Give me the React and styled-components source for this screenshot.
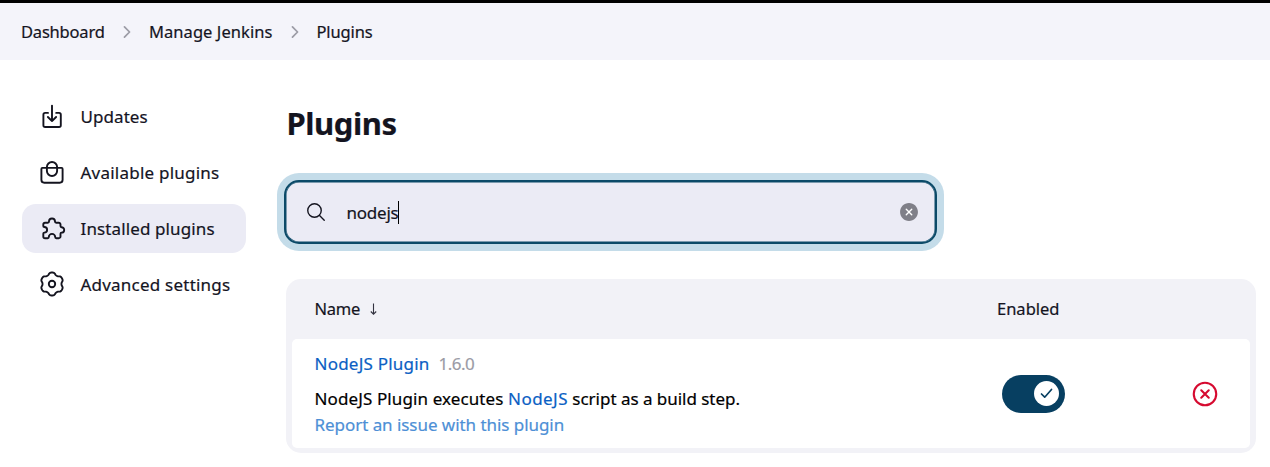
import React from "react";
import styled, { createGlobalStyle } from "styled-components";
import {
  IoSearchOutline,
  IoChevronForwardOutline,
  IoCloseCircle,
  IoCloseCircleOutline,
} from "react-icons/io5";

const GlobalStyle = createGlobalStyle`
  * { box-sizing: border-box; }
  body {
    margin: 0;
    background: #fff;
    color: #14141f;
    font-family: "Noto Sans", "Open Sans", sans-serif;
    font-size: 17px;
    line-height: 26px;
    overflow: hidden;
  }
`;

const Label = styled.span`
  white-space: nowrap;
  letter-spacing: ${(p) => p.$track || 0}px;
  -webkit-text-stroke: 0.2px currentColor;
`;

const Page = styled.div`
  height: 467px;
  border-top: 3px solid #000;
`;

const Breadcrumbs = styled.nav`
  height: 57px;
  padding-left: 21px;
  display: flex;
  align-items: center;
  background: #f4f4fa;
  font-size: 16.5px;
`;

const Crumb = styled.span`
  width: ${(p) => p.$width}px;
  flex: none;
`;

const Separator = styled(IoChevronForwardOutline)`
  width: 18px;
  height: 18px;
  margin: 0 13px 0 14px;
  color: #9c9ca6;
  flex: none;

  path {
    stroke-width: 50;
  }
`;

const Body = styled.div`
  display: flex;
  padding-left: 22px;
`;

const Sidebar = styled.aside`
  width: 224px;
  padding-top: 32px;
  display: flex;
  flex-direction: column;
  gap: 7px;
`;

const Task = styled.a`
  height: 49px;
  padding-left: 16px;
  display: flex;
  align-items: center;
  gap: 14.5px;
  border-radius: 14px;
  background: ${(p) => (p.$active ? "#ebebf5" : "transparent")};
`;

const TaskIcon = styled.svg`
  width: 28px;
  height: 28px;
  margin-bottom: 1px;
  flex: none;
  fill: none;
  stroke: #14141f;
  stroke-width: 1.9;
  stroke-linecap: round;
  stroke-linejoin: round;
`;

const Main = styled.main`
  width: 972px;
  margin-left: 38px;
  padding-top: 42px;
`;

const Title = styled.h1`
  margin: 0 0 0 2.5px;
  height: 44px;
  font-size: 31px;
  line-height: 43px;
  font-weight: 700;
`;

const SearchBox = styled.div`
  width: 653px;
  height: 64px;
  margin-top: 34px;
  padding: 0 15px 0 19px;
  display: flex;
  align-items: center;
  border: 2px solid #0b4a68;
  border-radius: 15px;
  background: #ebebf5;
  box-shadow: inset 0 0 0 0.5px #0b4a68, 0 0 0 7px #c4dce9;
`;

const SearchIcon = styled(IoSearchOutline)`
  width: 22px;
  height: 22px;
`;

const Query = styled.div`
  flex: 1;
  margin-left: 19.5px;
  padding-top: 1px;
  display: flex;
  align-items: center;
`;

const Caret = styled.span`
  width: 1px;
  height: 23px;
  margin-left: -0.5px;
  background: #000;
`;

const ClearIcon = styled(IoCloseCircle)`
  width: 22px;
  height: 22px;
  color: #7f7f88;
`;

const ClearButton = styled.span`
  display: flex;
  border-radius: 50%;
  background: radial-gradient(circle, #fff 6px, transparent 6.5px);
`;

const Table = styled.section`
  width: 970px;
  height: 174px;
  margin: 35px 0 0 2px;
  padding: 0 6px 5px;
  border-radius: 15px;
  background: #f2f2f7;
`;

const Columns = styled.div`
  display: grid;
  grid-template-columns: 682.5px 196px 1fr;
  align-items: center;
  padding-left: 22.5px;
`;

const TableHead = styled(Columns)`
  height: 60px;
  font-size: 16.5px;
`;

const TableRow = styled(Columns)`
  height: 109px;
  background: #fff;
  border-radius: 5px;
`;

const SortArrow = styled.svg`
  width: 9px;
  height: 12px;
  margin-left: 9px;
`;

const Details = styled.div`
  display: flex;
  flex-direction: column;
  padding-top: 1px;
`;

const NameLine = styled.div`
  display: flex;
  gap: 9px;
  margin-bottom: 9px;
`;

const Link = styled.a`
  color: ${(p) => (p.$soft ? "#4d8fd6" : "#0b5fc4")};
`;

const Version = styled.span`
  color: #9b9ba6;
`;

const Description = styled.div`
  color: #000;
  white-space: nowrap;
`;

const Toggle = styled.div`
  width: 63px;
  height: 38px;
  margin-left: 5px;
  padding-right: 6px;
  display: flex;
  align-items: center;
  justify-content: flex-end;
  border-radius: 19px;
  background: #073f61;
`;

const Knob = styled.div`
  width: 25px;
  height: 25px;
  display: flex;
  align-items: center;
  justify-content: center;
  border-radius: 50%;
  background: #fff;
`;

const RemoveIcon = styled(IoCloseCircleOutline)`
  width: 30px;
  height: 30px;
  margin-left: -3px;
  color: #d60a30;

  path {
    stroke-width: 36;
  }
`;

// Six rounded teeth, one every 60 degrees, joined by shallow hollows.
const gearOutline = Array.from({ length: 120 }, (_, i) => {
  const a = (i / 120) * Math.PI * 2;
  const r = 10.4 + 1.1 * Math.tanh(1.6 * Math.cos(6 * a) + 0.4);
  return `${(14 + r * Math.sin(a)).toFixed(2)},${(14 - r * Math.cos(a)).toFixed(2)}`;
}).join(" ");

const UpdatesIcon = () => (
  <TaskIcon viewBox="0 0 28 28">
    <path d="M10 10.9H7.2a1.8 1.8 0 0 0-1.8 1.8V23.2A1.8 1.8 0 0 0 7.2 25H21a1.8 1.8 0 0 0 1.8-1.8V12.7A1.8 1.8 0 0 0 21 10.9H18.2M14 3.6V19M9.9 15L14 19.1L18.1 15" />
  </TaskIcon>
);

const BagIcon = () => (
  <TaskIcon viewBox="0 0 28 28">
    <path d="M4.4 9.9H23.6a1 1 0 0 1 1 1V21.8a2.9 2.9 0 0 1-2.9 2.9H6.3a2.9 2.9 0 0 1-2.9-2.9V10.9a1 1 0 0 1 1-1z" />
    <path d="M8.9 9.9V9.1a5.1 5.1 0 0 1 10.2 0V12.9a5.1 5.1 0 0 1-10.2 0z" />
  </TaskIcon>
);

const PuzzleIcon = () => (
  <TaskIcon viewBox="0 0 28 28">
    <path d="M5.3 10.5a1.8 1.8 0 0 1 1.8-1.8H9.8c.8 0 1.2-.4 1.2-1.2a3 3 0 0 1 6 0c0 .8.4 1.2 1.2 1.2H20.7a1.8 1.8 0 0 1 1.8 1.8v1.6c0 .7.4 1.1 1 1.1a2.7 2.7 0 0 1 0 5.4c-.6 0-1 .4-1 1.1V22.4a1.8 1.8 0 0 1-1.8 1.8H18.3c-.7 0-1.1-.4-1.1-1.1a3.2 3.2 0 0 0-6.4 0c0 .7-.4 1.1-1.1 1.1H7.1a1.8 1.8 0 0 1-1.8-1.8V19.7c0-.7.4-1.1 1-1.1a2.8 2.8 0 0 0 0-5.6c-.6 0-1-.4-1-1.1z" />
  </TaskIcon>
);

const GearIcon = () => (
  <TaskIcon viewBox="0 0 28 28">
    <polygon points={gearOutline} />
    <circle cx="14" cy="14" r="3.2" />
  </TaskIcon>
);

const tasks = [
  { label: "Updates", icon: UpdatesIcon, track: 0.07 },
  { label: "Available plugins", icon: BagIcon, track: 0.23 },
  { label: "Installed plugins", icon: PuzzleIcon, track: 0.12, active: true },
  { label: "Advanced settings", icon: GearIcon, track: 0.22 },
];

export default function App() {
  return (
    <Page>
      <GlobalStyle />
      <Breadcrumbs>
        <Crumb $width={83}><Label $track={-0.2}>Dashboard</Label></Crumb>
        <Separator />
        <Crumb $width={122.5}><Label $track={0.06}>Manage Jenkins</Label></Crumb>
        <Separator />
        <Crumb><Label $track={-0.12}>Plugins</Label></Crumb>
      </Breadcrumbs>
      <Body>
        <Sidebar>
          {tasks.map(({ label, icon: Icon, track, active }) => (
            <Task key={label} $active={active}>
              <Icon />
              <Label $track={track}>{label}</Label>
            </Task>
          ))}
        </Sidebar>
        <Main>
          <Title><Label $track={-0.45}>Plugins</Label></Title>
          <SearchBox>
            <SearchIcon />
            <Query><Label $track={-0.22}>nodejs</Label><Caret /></Query>
            <ClearButton><ClearIcon /></ClearButton>
          </SearchBox>
          <Table>
            <TableHead>
              <div>
                <Label $track={-0.25}>Name</Label>
                <SortArrow viewBox="0 0 9 12" fill="none" stroke="#333340" strokeWidth="1.1">
                  <path d="M4.5 0.5V11M1.8 8.5L4.5 11.2L7.2 8.5" />
                </SortArrow>
              </div>
              <Label>Enabled</Label>
            </TableHead>
            <TableRow>
              <Details>
                <NameLine>
                  <Link><Label $track={0.22}>NodeJS Plugin</Label></Link>
                  <Version><Label $track={-0.5}>1.6.0</Label></Version>
                </NameLine>
                <Description>
                  <Label $track={0.11}>NodeJS Plugin executes </Label>
                  <Link><Label $track={0.45}>NodeJS</Label></Link>
                  <Label $track={-0.03}> script as a build step.</Label>
                </Description>
                <Link $soft><Label $track={-0.05}>Report an issue with this plugin</Label></Link>
              </Details>
              <Toggle>
                <Knob>
                  <svg width="13" height="11" viewBox="0 0 13 11" fill="none" stroke="#073f61" strokeWidth="1.7" strokeLinecap="round" strokeLinejoin="round">
                    <path d="M1.5 6L4.7 9.2L11.5 1.5" />
                  </svg>
                </Knob>
              </Toggle>
              <RemoveIcon />
            </TableRow>
          </Table>
        </Main>
      </Body>
    </Page>
  );
}
